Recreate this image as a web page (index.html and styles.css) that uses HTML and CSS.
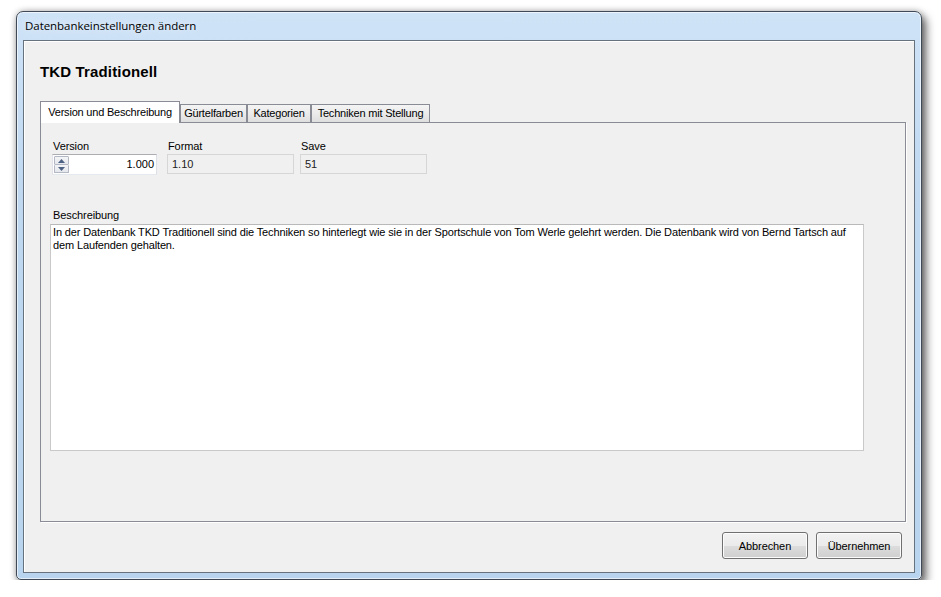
FILE: index.html
```html
<!DOCTYPE html>
<html lang="de">
<head>
    <meta charset="UTF-8">
    <title>Datenbankeinstellungen ändern</title>
    <link rel="stylesheet" href="styles.css">
</head>
<body>

    <!-- Dialog window -->
    <div class="window">
        <div class="titlebar">Datenbankeinstellungen ändern</div>

        <div class="client">
            <h1 class="heading">TKD Traditionell</h1>

            <!-- Tab strip -->
            <div class="tabs">
                <div class="tab tab-active tab-version">Version und Beschreibung</div>
                <div class="tab tab-belts">Gürtelfarben</div>
                <div class="tab tab-cats">Kategorien</div>
                <div class="tab tab-tech">Techniken mit Stellung</div>
            </div>

            <div class="tabpage">
                <div class="fields">
                    <div class="field field-version">
                        <label>Version</label>
                        <div class="spin">
                            <div class="spin-buttons">
                                <div class="spin-btn">
                                    <svg width="7" height="4" viewBox="0 0 7 4"><path d="M3.5 0 L7 4 L0 4 Z" fill="#4d6185"/></svg>
                                </div>
                                <div class="spin-btn">
                                    <svg width="7" height="4" viewBox="0 0 7 4"><path d="M0 0 L7 0 L3.5 4 Z" fill="#4d6185"/></svg>
                                </div>
                            </div>
                            <span class="spin-value">1.000</span>
                        </div>
                    </div>
                    <div class="field field-format">
                        <label>Format</label>
                        <div class="readonly">1.10</div>
                    </div>
                    <div class="field field-save">
                        <label>Save</label>
                        <div class="readonly">51</div>
                    </div>
                </div>

                <div class="desc">
                    <label>Beschreibung</label>
                    <div class="memo">In der Datenbank TKD Traditionell sind die Techniken so hinterlegt wie sie in der Sportschule von Tom Werle gelehrt werden. Die Datenbank wird von Bernd Tartsch auf<br>dem Laufenden gehalten.</div>
                </div>
            </div>

            <!-- Dialog buttons -->
            <div class="buttons">
                <button class="btn">Abbrechen</button>
                <button class="btn">Übernehmen</button>
            </div>
        </div>
    </div>

</body>
</html>
```

FILE: styles.css
```css
/* General Styling */
body {
    margin: 0;
    padding: 11px 0 0 16px;
    background: #ffffff;
    font-family: 'Liberation Sans', Arial, sans-serif;
    font-size: 11px;
    color: #000;
    overflow: hidden;
}

/* Window frame (Aero style) */
.window {
    width: 906px;
    height: 569px;
    box-sizing: border-box;
    border: 1px solid #3f4a56;
    border-radius: 7px 7px 5px 5px;
    padding: 0 6px 6px 6px;
    background: linear-gradient(180deg, #cfe3f7 0%, #c0d9f1 30%, #b9d4ee 100%);
    box-shadow: 4px 5px 10px rgba(0, 0, 0, 0.6),
                0 0 6px rgba(0, 0, 0, 0.25),
                inset 0 0 0 1px rgba(255, 255, 255, 0.6);
    display: flex;
    flex-direction: column;
}

.titlebar {
    height: 28px;
    line-height: 28px;
    padding-left: 2px;
    font-family: 'Open Sans', 'Noto Sans', sans-serif;
    font-size: 11.5px;
    letter-spacing: -0.05px;
    color: #000;
    text-shadow: 0 0 8px rgba(255, 255, 255, 0.9);
}

/* Client area */
.client {
    flex: 1;
    border: 1px solid #66727e;
    background: #f0f0f0;
    box-shadow: inset 1px 1px 0 #ffffff;
    padding: 0 12px 0 16px;
    display: flex;
    flex-direction: column;
}

.heading {
    margin: 22px 0 0 0;
    font-size: 15px;
    line-height: 17px;
    font-weight: bold;
    letter-spacing: 0.15px;
}

/* Tabs */
.tabs {
    display: flex;
    align-items: flex-end;
    height: 21px;
    margin-top: 21px;
    position: relative;
    z-index: 1;
}

.tab {
    height: 18px;
    box-sizing: border-box;
    border: 1px solid #898c95;
    border-bottom: none;
    background: linear-gradient(180deg, #f4f4f4 0%, #ebebeb 50%, #dedede 100%);
    line-height: 17px;
    text-align: center;
    letter-spacing: -0.2px;
    white-space: nowrap;
}

.tab-active {
    height: 22px;
    margin-bottom: -1px;
    background: #ffffff;
    line-height: 21px;
}

.tab-version { width: 140px; }
.tab-belts { width: 67px; }
.tab-cats { width: 64px; }
.tab-tech { width: 119px; }

.tabpage {
    width: 866px;
    height: 400px;
    box-sizing: border-box;
    border: 1px solid #898c95;
    background: #f0f0f0;
    box-shadow: 1px 1px 0 #ffffff;
    padding: 17px 0 0 11px;
}

/* Version / Format / Save row */
.fields {
    display: flex;
}

.field label,
.desc label {
    display: block;
    height: 13px;
    line-height: 13px;
    padding-left: 1px;
    margin-bottom: 1px;
    letter-spacing: -0.1px;
}

.field-version { width: 105px; margin-right: 10px; }
.field-format { width: 127px; margin-right: 6px; }
.field-save { width: 127px; }

.spin {
    height: 21px;
    box-sizing: border-box;
    border: 1px solid #abadb3;
    border-left-color: #e2e3ea;
    border-right-color: #dbdfe6;
    border-bottom-color: #e3e9ef;
    background: #ffffff;
    display: flex;
    align-items: center;
    padding: 0 2px 0 1px;
}

.spin-buttons {
    width: 15px;
    height: 17px;
    display: flex;
    flex-direction: column;
}

.spin-btn {
    flex: 1;
    box-sizing: border-box;
    border: 1px solid #b3b8c4;
    border-radius: 1px;
    background: linear-gradient(180deg, #f4f5f7 0%, #e4e7ec 100%);
    display: flex;
    align-items: center;
    justify-content: center;
}

.spin-btn + .spin-btn {
    border-top: none;
}

.spin-value {
    flex: 1;
    text-align: right;
    line-height: 19px;
}

.readonly {
    height: 20px;
    margin-top: 1px;
    box-sizing: border-box;
    border: 1px solid #d6d6d6;
    background: #f0f0f0;
    line-height: 18px;
    padding-left: 4px;
    color: #222;
}

/* Beschreibung */
.desc {
    margin-top: 34px;
}

.desc label {
    padding-left: 1px;
    margin-bottom: 2px;
}

.memo {
    width: 814px;
    height: 227px;
    margin-left: -2px;
    box-sizing: border-box;
    border: 1px solid #c9c9c9;
    border-top-color: #b9b9b9;
    background: #ffffff;
    padding: 1px 2px;
    line-height: 12.5px;
    letter-spacing: -0.13px;
    white-space: nowrap;
}

/* Dialog buttons */
.buttons {
    display: flex;
    justify-content: flex-end;
    gap: 8px;
    margin-top: 10px;
}

.btn {
    width: 86px;
    height: 27px;
    border: 1px solid #707070;
    border-radius: 3px;
    background: linear-gradient(180deg, #f2f2f2 0%, #ebebeb 50%, #dddddd 51%, #cfcfcf 100%);
    box-shadow: inset 0 0 0 1px #fcfcfc;
    font-family: 'Liberation Sans', Arial, sans-serif;
    font-size: 11px;
    color: #000;
    padding: 0;
    letter-spacing: -0.1px;
}
```
